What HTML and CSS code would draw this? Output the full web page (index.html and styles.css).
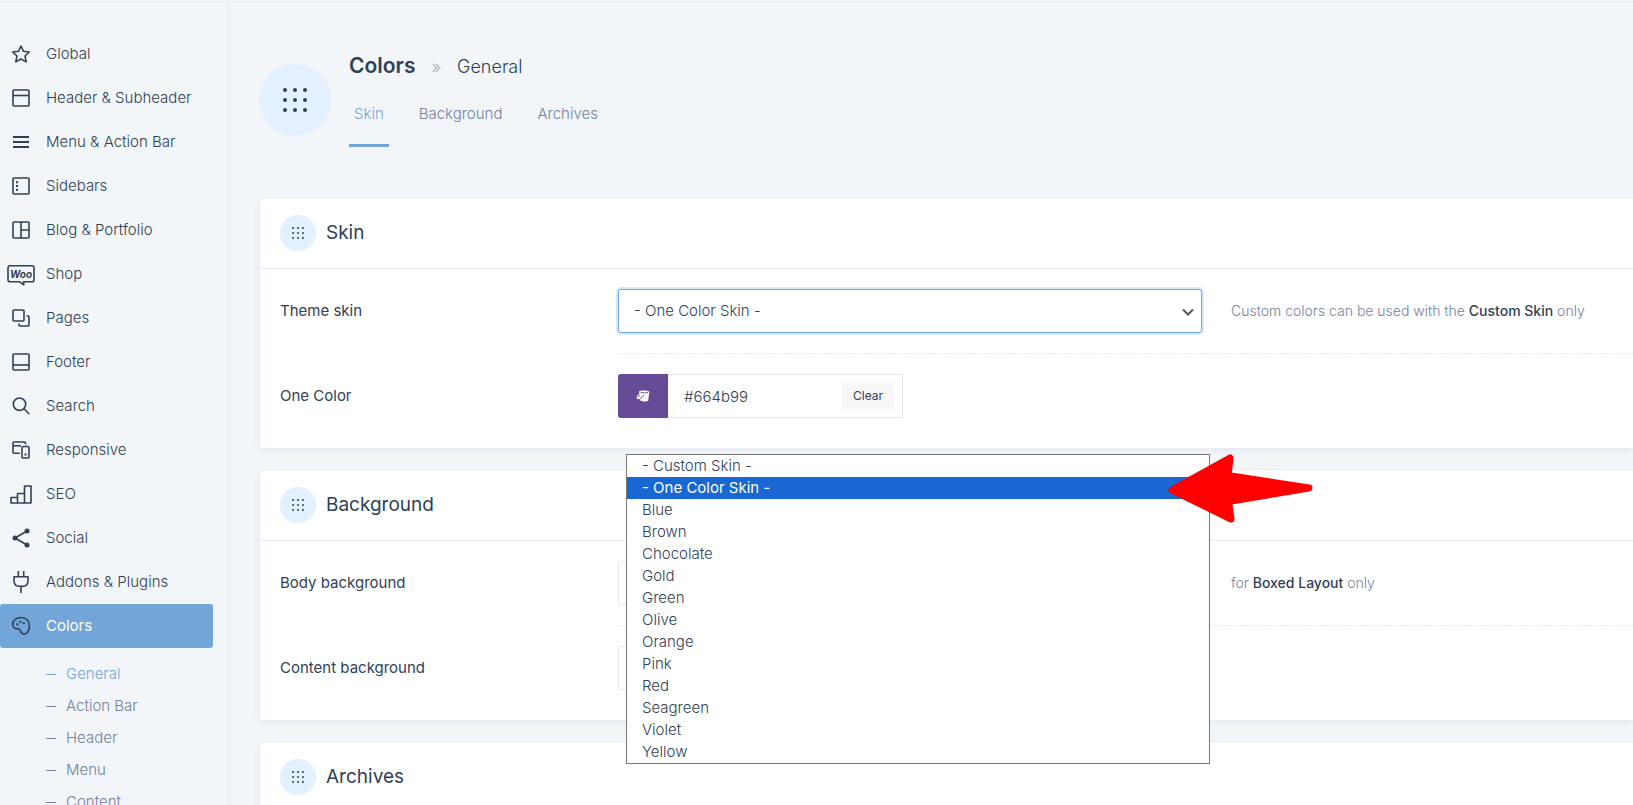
FILE: index.html
```html
<!DOCTYPE html>
<html lang="en">
<head>
<meta charset="utf-8">
<title>Theme Options – Colors</title>
<link rel="stylesheet" href="styles.css">
</head>
<body>
<svg class="defs" aria-hidden="true">
  <symbol id="dots" viewBox="0 0 24 24">
    <circle cx="2" cy="2" r="2"/><circle cx="12" cy="2" r="2"/><circle cx="22" cy="2" r="2"/>
    <circle cx="2" cy="12" r="2"/><circle cx="12" cy="12" r="2"/><circle cx="22" cy="12" r="2"/>
    <circle cx="2" cy="22" r="2"/><circle cx="12" cy="22" r="2"/><circle cx="22" cy="22" r="2"/>
  </symbol>
</svg>
<div class="app">
  <nav class="sidebar" aria-label="Theme options">
    <ul class="menu">
      <li><a class="menu-link" href="#global"><svg class="icon" viewBox="0 0 28 28"><path d="M14 6l2.500 5.300 5.800.7-4.300 4 1.200 5.900-5.200-2.900-5.200 2.900 1.200-5.900-4.300-4 5.800-.7z"/></svg>Global</a></li>
      <li><a class="menu-link" href="#header"><svg class="icon" viewBox="0 0 28 28"><rect x="6" y="6" width="16" height="16" rx="1"/><path d="M6 11.500h16"/></svg>Header &amp; Subheader</a></li>
      <li><a class="menu-link" href="#menu"><svg class="icon" viewBox="0 0 28 28"><path stroke-width="2" d="M6 9h16M6 14h16M6 19h16"/></svg>Menu &amp; Action Bar</a></li>
      <li><a class="menu-link" href="#sidebars"><svg class="icon" viewBox="0 0 28 28"><rect x="6" y="6" width="16" height="16" rx="1"/><path stroke-width="2" d="M9 10.300h2M9 14h2M9 17.700h2"/></svg>Sidebars</a></li>
      <li><a class="menu-link" href="#blog"><svg class="icon" viewBox="0 0 28 28"><rect x="6" y="6" width="16" height="16" rx="1"/><path d="M14 6v16M14 14h8"/></svg>Blog &amp; Portfolio</a></li>
      <li><a class="menu-link" href="#shop"><svg class="icon" viewBox="0 0 28 28"><path d="M3 5.800h22a2 2 0 0 1 2 2v12a2 2 0 0 1-2 2h-8.500l.3 3-4-3H3a2 2 0 0 1-2-2v-12a2 2 0 0 1 2-2z"/><text class="woo" x="14" y="17.500" text-anchor="middle">Woo</text></svg>Shop</a></li>
      <li><a class="menu-link" href="#pages"><svg class="icon" viewBox="0 0 28 28"><rect x="6" y="6" width="11" height="11" rx="1"/><path d="M19.500 12h1.500a1 1 0 0 1 1 1v8a1 1 0 0 1-1 1h-8a1 1 0 0 1-1-1v-1.500"/></svg>Pages</a></li>
      <li><a class="menu-link" href="#footer"><svg class="icon" viewBox="0 0 28 28"><rect x="6" y="6" width="16" height="16" rx="1"/><path d="M6 17h16"/></svg>Footer</a></li>
      <li><a class="menu-link" href="#search"><svg class="icon" viewBox="0 0 28 28"><circle cx="12.500" cy="12.200" r="6.200"/><path d="M17 16.800l5.200 5.200"/></svg>Search</a></li>
      <li><a class="menu-link" href="#responsive"><svg class="icon" viewBox="0 0 28 28"><path d="M13 17.200H7a1 1 0 0 1-1-1V7a1 1 0 0 1 1-1h10.500a1 1 0 0 1 1 1v1.500M6 9.800h8"/><rect x="15" y="10.500" width="7" height="11.500" rx="1"/><path stroke-width="2" d="M17.500 18.500h2"/></svg>Responsive</a></li>
      <li><a class="menu-link" href="#seo"><svg class="icon" viewBox="0 0 28 28"><path d="M4 17.500h6.500V23H4zM10.500 13.500h7V23h-7zM17.500 6h6.500v17h-6.500z"/></svg>SEO</a></li>
      <li><a class="menu-link" href="#social"><svg class="icon" viewBox="0 0 28 28"><path d="M20 7L8 14l12 7"/><g fill="currentColor" stroke="none"><circle cx="20" cy="7" r="2.500"/><circle cx="8" cy="14" r="2.500"/><circle cx="20" cy="21" r="2.500"/></g></svg>Social</a></li>
      <li><a class="menu-link" href="#addons"><svg class="icon" viewBox="0 0 28 28"><path d="M11.300 3v5.500M16.700 3v5.500M7 8.700h14c.5 6-.8 9.300-4 9.500h-6c-3.200-.2-4.500-3.500-4-9.500zM14 18.200V25"/></svg>Addons &amp; Plugins</a></li>
      <li>
        <a class="menu-link active" href="#colors"><svg class="icon" viewBox="0 0 28 28"><path d="M14 5.500c5 0 8.400 3.300 8.400 8.700 0 4.300-2.400 8-5.400 8-3.200 0-3-3.300-4.500-4.700-1.400-1.200-3-.2-4.700-1.200-1.500-.9-2.100-2.200-2.100-3.800C5.700 8.500 9.300 5.500 14 5.500z"/><path stroke-width="2" d="M9.300 12.300h2M12.300 9.700h2M15.700 11h2"/></svg>Colors</a>
        <ul class="submenu">
          <li><a class="submenu-link current" href="#general">General</a></li>
          <li><a class="submenu-link" href="#action-bar">Action Bar</a></li>
          <li><a class="submenu-link" href="#colors-header">Header</a></li>
          <li><a class="submenu-link" href="#colors-menu">Menu</a></li>
          <li><a class="submenu-link" href="#content">Content</a></li>
        </ul>
      </li>
    </ul>
  </nav>

  <main class="main">
    <header class="page-header">
      <span class="badge badge-large"><svg class="dots-large"><use href="#dots"/></svg></span>
      <div class="page-heading">
        <div class="breadcrumb">
          <h1 class="page-title">Colors</h1>
          <span class="separator">»</span>
          <span class="page-section">General</span>
        </div>
        <nav class="tabs" aria-label="Sections">
          <a class="tab selected" href="#skin">Skin</a>
          <a class="tab" href="#background">Background</a>
          <a class="tab" href="#archives">Archives</a>
        </nav>
      </div>
    </header>

    <section class="card" id="skin">
      <div class="card-header">
        <span class="badge"><svg class="dots-small"><use href="#dots"/></svg></span>
        <h2 class="card-title">Skin</h2>
      </div>
      <div class="card-body">
        <div class="row">
          <label class="row-label" for="theme-skin">Theme skin</label>
          <div class="row-content">
            <div class="field">
              <select class="control select focused" id="theme-skin">
                <option>- One Color Skin -</option>
              </select>
              <svg class="chevron" viewBox="0 0 12 8"><path d="M1 1.500l5 5 5-5"/></svg>
              <ul class="options" role="listbox" aria-label="Theme skin">
                <li class="option" role="option">- Custom Skin -</li>
                <li class="option highlighted" role="option" aria-selected="true">- One Color Skin -</li>
                <li class="option" role="option">Blue</li>
                <li class="option" role="option">Brown</li>
                <li class="option" role="option">Chocolate</li>
                <li class="option" role="option">Gold</li>
                <li class="option" role="option">Green</li>
                <li class="option" role="option">Olive</li>
                <li class="option" role="option">Orange</li>
                <li class="option" role="option">Pink</li>
                <li class="option" role="option">Red</li>
                <li class="option" role="option">Seagreen</li>
                <li class="option" role="option">Violet</li>
                <li class="option" role="option">Yellow</li>
              </ul>
              <svg class="pointer" viewBox="0 0 146 70"><path d="M4 36L62 4L60 21.500L141 34L60.500 47.500L63 65z"/></svg>
            </div>
            <p class="hint">Custom colors can be used with the <b>Custom Skin</b> only</p>
          </div>
        </div>
        <div class="row">
          <label class="row-label" for="one-color">One Color</label>
          <div class="row-content">
            <div class="color-picker">
              <button class="swatch" type="button" aria-label="Pick a color">
                <svg class="bucket" viewBox="0 0 14 12"><path fill="#fff" d="M3 1.500C4 .2 11 .2 13 1.500c.4.300.3 1 .2 1.500l-1 7.500c-.2 1-5.500 1.500-7.200.6C4.500 10.800 4.300 10 4 9 2 9.600.5 8.800.5 7.300.5 6 1.700 4.800 3.300 4.200z"/><path fill="none" stroke="#664b99" d="M4.500 2.300c2 .8 5.500.8 7.500 0M2.200 7c0-1 1-1.700 1.800-1.800M3.800 8.200c2-.2 3.500-1.500 3.800-3"/></svg>
              </button>
              <input class="color-value" id="one-color" type="text" value="#664b99">
              <button class="clear" type="button">Clear</button>
            </div>
          </div>
        </div>
      </div>
    </section>

    <section class="card" id="background">
      <div class="card-header">
        <span class="badge"><svg class="dots-small"><use href="#dots"/></svg></span>
        <h2 class="card-title">Background</h2>
      </div>
      <div class="card-body">
        <div class="row">
          <label class="row-label" for="body-bg">Body background</label>
          <div class="row-content">
            <div class="field"><input class="control" id="body-bg" type="text"></div>
            <p class="hint">for <b>Boxed Layout</b> only</p>
          </div>
        </div>
        <div class="row">
          <label class="row-label" for="content-bg">Content background</label>
          <div class="row-content">
            <div class="field"><input class="control" id="content-bg" type="text"></div>
          </div>
        </div>
      </div>
    </section>

    <section class="card" id="archives">
      <div class="card-header">
        <span class="badge"><svg class="dots-small"><use href="#dots"/></svg></span>
        <h2 class="card-title">Archives</h2>
      </div>
    </section>
  </main>
</div>
</body>
</html>
```

FILE: styles.css
```css
* {
  box-sizing: border-box;
}

body {
  margin: 0;
  background: #f2f6f9;
  color: #304156;
  font-family: Inter, "Open Sans", sans-serif;
  font-size: 14px;
  font-weight: 300;
  line-height: 22px;
}

h1, h2, p, ul {
  margin: 0;
  padding: 0;
}

ul {
  list-style: none;
}

a {
  color: inherit;
  text-decoration: none;
}

button, input, select {
  font: inherit;
  color: inherit;
}

.defs {
  display: none;
}

.app {
  display: flex;
  height: 100vh;
  padding-top: 1px;
  overflow: hidden;
}

/* Sidebar */
.sidebar {
  flex: 0 0 229px;
  padding: 30px 15px 0 0;
  border-top: 1px solid #e5e9f2;
  border-right: 1px solid #e2e8f2;
}

.menu-link {
  display: flex;
  align-items: center;
  gap: 11px;
  height: 44px;
  padding-left: 7px;
  font-size: 15px;
}

.menu-link.active {
  background: #72a5d8;
  border-radius: 3px;
  color: #fff;
  font-weight: 400;
}

.icon {
  flex: none;
  width: 28px;
  height: 28px;
  color: #304156;
  fill: none;
  stroke: currentColor;
  stroke-width: 1.6;
  stroke-linejoin: round;
}

.woo {
  fill: currentColor;
  stroke: none;
  font-size: 10px;
  font-style: italic;
  font-weight: 700;
}

.submenu {
  padding: 10px 0 0 46px;
}

.submenu-link {
  display: flex;
  align-items: center;
  gap: 10px;
  height: 32px;
  color: #7482a0;
  font-size: 15px;
}

.submenu-link::before {
  content: "";
  width: 10px;
  height: 1px;
  background: currentColor;
}

.submenu-link.current,
.tab.selected {
  color: #72a5d8;
}

/* Page header */
.main {
  flex: 1;
  min-width: 0;
  padding: 46px 0 0 30px;
  border-top: 1px solid #e5e9f2;
}

.page-header {
  display: flex;
  gap: 18px;
  margin-bottom: 50px;
}

.badge {
  display: flex;
  flex: none;
  align-items: center;
  justify-content: center;
  width: 36px;
  height: 36px;
  border-radius: 50%;
  background: #e2f0ff;
  fill: #304156;
}

.badge-large {
  width: 72px;
  height: 72px;
  margin-top: 16px;
}

.dots-large {
  width: 24px;
  height: 24px;
}

.dots-small {
  width: 12px;
  height: 12px;
}

.breadcrumb {
  display: flex;
  align-items: baseline;
  gap: 16px;
  line-height: 36px;
}

.page-title {
  font-size: 21px;
  font-weight: 600;
}

.separator {
  color: #a9b0ba;
  font-size: 18px;
}

.page-section {
  font-size: 18px;
}

.tabs {
  display: flex;
  gap: 25px;
}

.tab {
  height: 62px;
  padding: 18px 5px 0;
  border-bottom: 3px solid transparent;
  color: #7482a0;
  font-size: 15px;
}

.tab.selected {
  border-color: #72a5d8;
}

/* Cards */
.card {
  margin: 0 0 21px;
  border: 1px solid #e9edf4;
  border-width: 1px 0 0 1px;
  border-radius: 3px 0 0 3px;
  background: #fff;
  box-shadow: 0 3px 6px rgba(60, 70, 140, 0.06);
}

.card-header {
  display: flex;
  align-items: center;
  gap: 10px;
  height: 71px;
  padding: 0 20px;
  border-bottom: 1px solid #e8ebf2;
}

.card-title {
  font-size: 19px;
  font-weight: 400;
}

.card-body {
  padding: 0 0 10px 20px;
}

.row {
  display: flex;
}

.row-label {
  flex: 0 0 338px;
  padding-top: 31px;
  font-size: 15px;
  font-weight: 400;
}

.row-content {
  display: flex;
  flex: 1;
  align-items: center;
  gap: 29px;
  min-width: 0;
  padding: 20px 0;
}

.row:not(:last-child) .row-content {
  border-bottom: 1px dashed #e4e8ec;
}

.field {
  position: relative;
  flex: 0 1 584px;
}

.control {
  display: block;
  width: 100%;
  height: 44px;
  padding: 0 15px;
  border: 1px solid #e2e7ee;
  border-radius: 3px;
  background: #fff;
  font-size: 15px;
}

.select {
  appearance: none;
}

.control.focused {
  border-color: #72a5d8;
  box-shadow: 0 0 0 2px #d9e8f7;
}

.chevron {
  position: absolute;
  right: 8px;
  top: 19px;
  width: 12px;
  height: 8px;
  fill: none;
  stroke: #50575e;
  stroke-width: 2;
}

.hint {
  flex: 1;
  color: #7482a0;
}

.hint b {
  color: #304156;
  font-weight: 500;
}

/* Open option list, floating over the cards below */
.options {
  position: absolute;
  z-index: 2;
  top: 165px;
  left: 8px;
  width: 100%;
  border: 1px solid #767676;
  background: #fff;
}

.option {
  height: 22px;
  padding: 0 15px;
  font-size: 15px;
}

.option.highlighted {
  background: #1967d2;
  color: #fff;
  font-weight: 400;
}

.pointer {
  position: absolute;
  z-index: 3;
  top: 165px;
  right: -112px;
  width: 146px;
  height: 70px;
  fill: #f00;
  stroke: #f00;
  stroke-width: 7;
  stroke-linejoin: round;
}

/* Color picker */
.color-picker {
  display: flex;
  align-items: center;
  width: 285px;
  height: 44px;
  padding-right: 8px;
  border: 1px solid #e2e7ee;
  border-left: 0;
  border-radius: 3px;
}

.swatch {
  display: flex;
  flex: 0 0 50px;
  align-items: center;
  justify-content: center;
  height: 44px;
  padding: 0;
  border: 0;
  border-radius: 3px 0 0 3px;
  background: #664b99;
}

.bucket {
  width: 14px;
  height: 12px;
}

.color-value {
  flex: 1;
  min-width: 0;
  height: 40px;
  padding: 0 16px;
  border: 0;
  background: transparent;
  font-size: 15px;
}

.clear {
  width: 52px;
  height: 26px;
  padding: 0;
  border: 0;
  border-radius: 3px;
  background: #f8f8f9;
  font-size: 12px;
  font-weight: 400;
}
```
